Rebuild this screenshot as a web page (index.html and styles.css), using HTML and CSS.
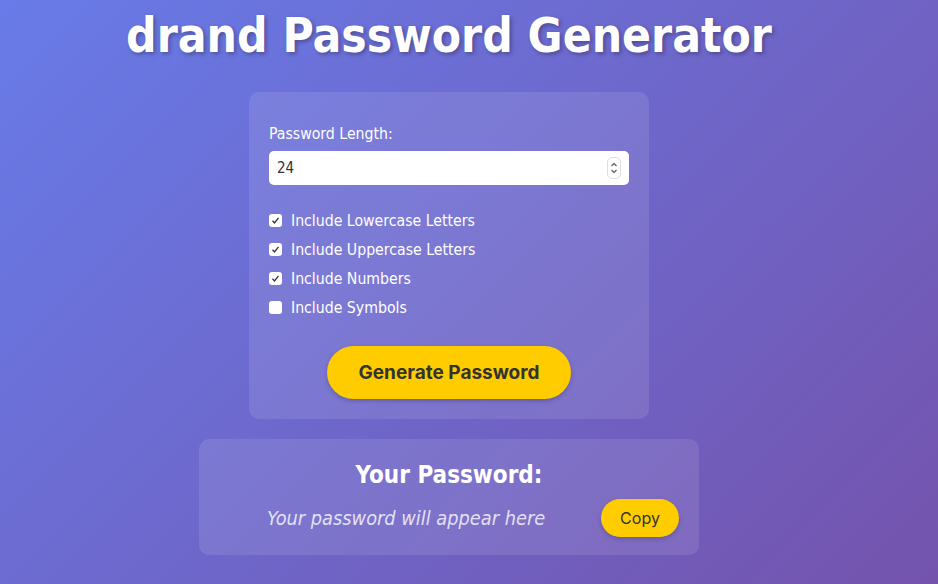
FILE: index.html
```html
<!DOCTYPE html>
<html lang="en">
<head>
<meta charset="utf-8">
<title>drand Password Generator</title>
<link rel="stylesheet" href="styles.css">
</head>
<body>
<main class="page">
  <h1 class="title">drand Password Generator</h1>
  <section class="card settings">
    <label class="field-label" for="len">Password Length:</label>
    <div class="number-input">
      <span class="number-value">24</span>
      <span class="spinner">
        <svg width="10" height="18" viewBox="0 0 10 18"><path d="M2.5 7 L5 4.5 L7.5 7" fill="none" stroke="#555" stroke-width="1.1"/><path d="M2.5 11 L5 13.5 L7.5 11" fill="none" stroke="#555" stroke-width="1.1"/></svg>
      </span>
    </div>
    <div class="options">
      <label class="option"><span class="box checked"><svg width="9" height="9" viewBox="0 0 9 9"><path d="M1.5 4.8 L3.5 7 L7.5 1.8" fill="none" stroke="#333" stroke-width="1.3"/></svg></span>Include Lowercase Letters</label>
      <label class="option"><span class="box checked"><svg width="9" height="9" viewBox="0 0 9 9"><path d="M1.5 4.8 L3.5 7 L7.5 1.8" fill="none" stroke="#333" stroke-width="1.3"/></svg></span>Include Uppercase Letters</label>
      <label class="option"><span class="box checked"><svg width="9" height="9" viewBox="0 0 9 9"><path d="M1.5 4.8 L3.5 7 L7.5 1.8" fill="none" stroke="#333" stroke-width="1.3"/></svg></span>Include Numbers</label>
      <label class="option"><span class="box"></span>Include Symbols</label>
    </div>
    <div class="actions">
      <button class="generate" type="button">Generate Password</button>
    </div>
  </section>
  <section class="card result">
    <h2 class="result-title">Your Password:</h2>
    <div class="result-row">
      <span class="placeholder">Your password will appear here</span>
      <button class="copy" type="button">Copy</button>
    </div>
  </section>
</main>
</body>
</html>
```

FILE: styles.css
```css
html, body {
  margin: 0;
  padding: 0;
  height: 100%;
}
body {
  background: linear-gradient(135deg, #687be8 0%, #7453ad 100%);
  font-family: "DejaVu Sans", Verdana, sans-serif;
  font-stretch: condensed;
  color: #fff;
  overflow: hidden;
}
.page {
  width: 898px;
  display: flex;
  flex-direction: column;
  align-items: center;
}
.title {
  margin: 8px 0 28px;
  font-size: 47.5px;
  font-weight: bold;
  line-height: 56px;
  text-shadow: 2px 2px 4px rgba(0,0,0,0.3);
}
.card {
  background: rgba(255,255,255,0.1);
  border-radius: 10px;
  box-sizing: border-box;
}
.settings {
  width: 400px;
  padding: 32px 20px 20px;
}
.field-label {
  display: block;
  font-size: 15.7px;
  line-height: 19px;
  margin-bottom: 8px;
}
.number-input {
  height: 34px;
  background: #fff;
  border-radius: 5px;
  display: flex;
  align-items: center;
  justify-content: space-between;
  padding: 0 8px;
}
.number-value {
  font-family: "DejaVu Sans", sans-serif;
  font-size: 15px;
  color: #333;
}
.spinner {
  width: 12px;
  height: 20px;
  border: 1px solid #ddd;
  border-radius: 5px;
  display: flex;
  align-items: center;
  justify-content: center;
}
.options {
  margin-top: 26px;
  display: flex;
  flex-direction: column;
  gap: 10px;
}
.option {
  display: flex;
  align-items: center;
  font-size: 15.7px;
  line-height: 19px;
}
.box {
  width: 13px;
  height: 13px;
  background: #fff;
  border-radius: 3px;
  margin-right: 9px;
  display: flex;
  align-items: center;
  justify-content: center;
}
.actions {
  display: flex;
  justify-content: center;
  margin-top: 29px;
}
.generate {
  width: 244px;
  height: 53px;
  border: none;
  border-radius: 27px;
  background: #ffcc00;
  color: #333;
  font-family: Inter, "Liberation Sans", sans-serif;
  font-size: 19px;
  font-weight: bold;
  box-shadow: 0 2px 5px rgba(0,0,0,0.2);
}
.result {
  width: 500px;
  margin-top: 20px;
  padding: 22px 20px 18px;
  display: flex;
  flex-direction: column;
  align-items: center;
}
.result-title {
  margin: 0 0 10px;
  font-size: 24px;
  font-weight: bold;
  line-height: 28px;
}
.result-row {
  width: 100%;
  display: flex;
  align-items: center;
  justify-content: space-between;
  padding-left: 48px;
  box-sizing: border-box;
}
.placeholder {
  font-size: 19.8px;
  font-style: italic;
  color: rgba(255,255,255,0.8);
}
.copy {
  width: 78px;
  height: 38px;
  border: none;
  border-radius: 19px;
  background: #ffcc00;
  color: #333;
  font-family: Inter, "Liberation Sans", sans-serif;
  font-size: 16px;
  box-shadow: 0 2px 5px rgba(0,0,0,0.2);
}
```
